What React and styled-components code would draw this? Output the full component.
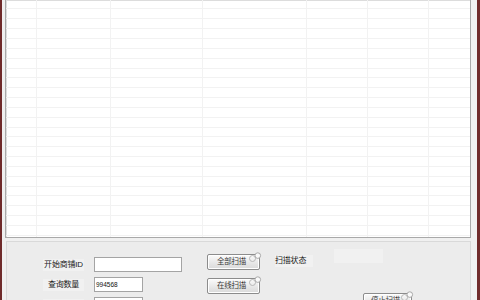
import React from 'react'
import styled, { createGlobalStyle } from 'styled-components'

const GlobalStyle = createGlobalStyle`
    html, body {
        margin: 0;
        padding: 0;
        background: #f0f0f0;
    }
    body {
        font-family: "Liberation Sans", "Noto Sans CJK SC", sans-serif;
    }
`

const columns = [31, 74, 92, 104, 61, 61, 41]
const rows = Array.from({ length: 25 })

function CornerMark() {
    return (
        <Mark width="14" height="11" viewBox="0 0 14 11">
            <circle cx="4.5" cy="6.5" r="3" fill="none" stroke="#b8b8b8" strokeWidth="1" />
            <circle cx="9.8" cy="3.6" r="2.8" fill="#fafafa" stroke="#a9a9a9" strokeWidth="1" />
        </Mark>
    )
}

function ScanButton({ children, width }) {
    return (
        <Button width={width}>
            {children}
            <CornerMark />
        </Button>
    )
}

function App() {
    return (
        <Window>
            <GlobalStyle />
            <ListView>
                {rows.map((_, r) => (
                    <Row key={r} first={r === 0}>
                        {columns.map((w, c) => (
                            <Cell key={c} width={w} last={c === columns.length - 1} />
                        ))}
                    </Row>
                ))}
            </ListView>
            <Panel>
                <FieldColumn>
                    <FieldRow>
                        <Label>开始商铺ID</Label>
                        <Input width={88} />
                    </FieldRow>
                    <FieldRow>
                        <Label>查询数量</Label>
                        <Input width={49}>994568</Input>
                    </FieldRow>
                    <FieldRow>
                        <Label />
                        <Input width={49} />
                    </FieldRow>
                </FieldColumn>
                <ButtonColumn>
                    <ScanButton width={53}>全部扫描</ScanButton>
                    <ScanButton width={53}>在线扫描</ScanButton>
                </ButtonColumn>
                <StatusColumn>
                    <StatusRow>
                        <StatusLabel>扫描状态</StatusLabel>
                        <StatusBox />
                    </StatusRow>
                    <StopWrap>
                        <ScanButton width={49}>停止扫描</ScanButton>
                    </StopWrap>
                </StatusColumn>
            </Panel>
        </Window>
    )
}

export default App

const Window = styled.div`
    width: 480px;
    height: 300px;
    box-sizing: border-box;
    overflow: hidden;
    background: #f0f0f0;
    border-left: 2px solid #6f2b2b;
    border-right: 3px solid #6f2b2b;
    display: flex;
    flex-direction: column;
`

const ListView = styled.div`
    margin: 0 6px 0 3px;
    height: 238px;
    box-sizing: border-box;
    flex-shrink: 0;
    background: #ffffff;
    border: 1px solid #a9a9a9;
    border-top: none;
    box-shadow: inset 1px 1px 0 #dcdcdc;
    overflow: hidden;
    display: flex;
    flex-direction: column;
`

const Row = styled.div`
    display: flex;
    height: 9.85px;
    flex-shrink: 0;
    box-sizing: border-box;
    border-bottom: 1px solid #f2f2f2;
    margin-top: ${props => props.first ? '-0.4px' : '0'};
`

const Cell = styled.div`
    width: ${props => props.width}px;
    flex: ${props => props.last ? '1' : 'none'};
    box-sizing: border-box;
    border-right: ${props => props.last ? 'none' : '1px solid #f2f2f2'};
`

const Panel = styled.div`
    margin: 3px 6px 0 4px;
    flex: 1;
    background: #ececec;
    border: 1px solid #d9d9d9;
    border-bottom: none;
    display: flex;
    align-items: flex-start;
`

const FieldColumn = styled.div`
    display: flex;
    flex-direction: column;
    gap: 5px;
    padding: 15px 0 0 36px;
    width: 160px;
    flex-shrink: 0;
`

const FieldRow = styled.div`
    display: flex;
    align-items: center;
    gap: 10px;
    height: 15px;
`

const Label = styled.div`
    width: 41px;
    height: 12px;
    line-height: 12px;
    background: #f1f1f1;
    color: #1a1a1a;
    font-size: 8px;
    text-align: center;
    white-space: nowrap;
    letter-spacing: -0.2px;
`

const Input = styled.div`
    width: ${props => props.width}px;
    height: 15px;
    box-sizing: border-box;
    background: #ffffff;
    border: 1px solid #a4a4a4;
    font-size: 6.5px;
    line-height: 13px;
    padding-left: 1px;
    color: #111;
`

const ButtonColumn = styled.div`
    display: flex;
    flex-direction: column;
    gap: 8px;
    padding-top: 12px;
    margin-left: 4px;
    width: 68px;
    flex-shrink: 0;
`

const Button = styled.div`
    position: relative;
    width: ${props => props.width}px;
    height: 16px;
    box-sizing: border-box;
    border: 1px solid #8c8c8c;
    border-radius: 2px;
    background: linear-gradient(#fbfbfb, #e6e6e6 60%, #dadada);
    box-shadow: inset 0 0 0 1px #ffffff;
    color: #3a3a3a;
    font-size: 7.5px;
    line-height: 14px;
    text-align: center;
    padding-right: 4px;
    letter-spacing: -0.3px;
`

const Mark = styled.svg`
    position: absolute;
    top: -3px;
    right: -3px;
`

const StatusColumn = styled.div`
    display: flex;
    flex-direction: column;
    padding-top: 7px;
`

const StatusRow = styled.div`
    display: flex;
    align-items: flex-start;
    gap: 21px;
`

const StatusLabel = styled.div`
    margin-top: 6px;
    width: 38px;
    height: 12px;
    line-height: 12px;
    background: #f1f1f1;
    color: #1a1a1a;
    font-size: 8px;
    white-space: nowrap;
    letter-spacing: -0.2px;
`

const StatusBox = styled.div`
    width: 49px;
    height: 14px;
    background: #f1f1f1;
`

const StopWrap = styled.div`
    margin: 26px 0 0 88px;
`
